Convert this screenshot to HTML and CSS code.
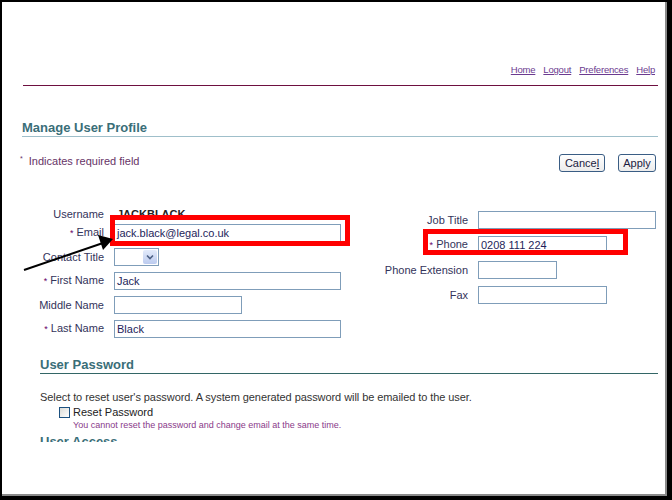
FILE: index.html
```html
<!DOCTYPE html>
<html>
<head>
<meta charset="utf-8">
<link rel="stylesheet" href="styles.css">
</head>
<body>
<div class="frame">
  <div class="page">
    <div class="viewport">
      <div class="global-links">
        <a href="#">Home</a><a href="#">Logout</a><a href="#">Preferences</a><a href="#">Help</a>
      </div>
      <div class="header-rule"></div>
      <h1 class="page-title">Manage User Profile</h1>
      <div class="action-row">
        <div class="required-note"><span class="req-star">*</span> Indicates required field</div>
        <div class="buttons">
          <button class="btn">Cance<u>l</u></button>
          <button class="btn">Apply</button>
        </div>
      </div>

      <div class="form">
        <div class="col-left">
          <div class="label">Username</div><div class="value-bold">JACKBLACK</div>
          <div class="label"><span class="star">*</span> Email</div><div class="field w227">jack.black@legal.co.uk</div>
          <div class="label">Contact Title</div>
          <div class="select"><span class="select-btn"><svg width="8" height="6" viewBox="0 0 8 6"><path d="M1 1.5 L4 4.5 L7 1.5" fill="none" stroke="#4d6185" stroke-width="1.6"/></svg></span></div>
          <div class="label"><span class="star">*</span> First Name</div><div class="field w227">Jack</div>
          <div class="label">Middle Name</div><div class="field w128"></div>
          <div class="label"><span class="star">*</span> Last Name</div><div class="field w227">Black</div>
        </div>
        <div class="col-right">
          <div class="label">Job Title</div><div class="field w178"></div>
          <div class="label"><span class="star">*</span> Phone</div><div class="field w129">0208 111 224</div>
          <div class="label">Phone Extension</div><div class="field w79"></div>
          <div class="label">Fax</div><div class="field w129"></div>
        </div>
        <div class="callout callout-email"></div>
        <div class="callout callout-phone"></div>
        <svg class="arrow" width="100" height="45" viewBox="0 0 100 45">
          <line x1="1" y1="40" x2="80" y2="13" stroke="#000" stroke-width="2"/>
          <polygon points="90,9 75,5 80,20" fill="#000"/>
        </svg>
      </div>

      <div class="section">
        <h2 class="section-title">User Password</h2>
        <p class="desc">Select to reset user's password. A system generated password will be emailed to the user.</p>
        <div class="check-row"><span class="checkbox"></span><span>Reset Password</span></div>
        <div class="tip">You cannot reset the password and change email at the same time.</div>
        <h2 class="section-title next">User Access</h2>
      </div>
    </div>
  </div>
</div>
</body>
</html>
```

FILE: styles.css
```css
* { box-sizing: border-box; }
html, body { margin: 0; padding: 0; background: #000; }
body { width: 672px; height: 500px; overflow: hidden; font-family: "Liberation Sans", Arial, sans-serif; }

.frame {
  width: 672px;
  height: 500px;
  border-top: 2px solid #000;
  border-left: 2px solid #000;
  border-right: 5px solid #000;
  border-bottom: 4px solid #000;
  background: #000;
}
.page {
  height: 100%;
  background: #fff;
  border-right: 2px solid #8a8a8a;
  border-bottom: 2px solid #8a8a8a;
}
.viewport {
  height: 440px;
  overflow: hidden;
  padding: 0 7px 0 21px;
}

.global-links {
  margin-top: 62px;
  display: flex;
  justify-content: flex-end;
  gap: 8px;
  padding-right: 3px;
  font-size: 9.5px;
  letter-spacing: -0.2px;
  line-height: 12px;
}
.global-links a { color: #6b3a8f; text-decoration: underline; }

.header-rule { margin-top: 9px; height: 1px; background: #6e1040; }

.page-title {
  margin: 34px 0 0 -1px;
  font-size: 13px;
  line-height: 16px;
  font-weight: bold;
  color: #3a6e78;
  border-bottom: 1px solid #9fbfca;
}

.action-row {
  margin-top: 17px;
  display: flex;
  justify-content: space-between;
  align-items: center;
  height: 18px;
}
.required-note { font-size: 11px; color: #663366; margin-left: -3px; margin-top: -4px; }
.req-star { font-size: 7px; vertical-align: top; margin-right: 3px; }
.buttons { display: flex; gap: 13px; margin-right: 2px; }
.btn {
  height: 18px;
  padding: 0 4px;
  font-family: "Liberation Sans", Arial, sans-serif;
  font-size: 11px;
  color: #1a1a40;
  border: 1px solid #3a5d84;
  border-radius: 3px;
  background: linear-gradient(#ffffff, #ececec);
}
.btn:first-child { width: 46px; }
.btn:last-child { width: 38px; }

.form {
  position: relative;
  margin-top: 38px;
  display: flex;
  align-items: flex-start;
  gap: 37px;
}
.col-left {
  width: 318px;
  display: grid;
  grid-template-columns: 81px auto;
  grid-template-rows: 8px repeat(5, 18px);
  column-gap: 10px;
  row-gap: 6px;
}
.col-right {
  width: 278px;
  margin-top: 1px;
  display: grid;
  grid-template-columns: 90px auto;
  grid-auto-rows: 18px;
  column-gap: 10px;
  row-gap: 7px;
}
.label {
  align-self: center;
  text-align: right;
  font-size: 11px;
  line-height: 13px;
  color: #33335a;
  white-space: nowrap;
}
.star { color: #660066; font-size: 9px; }
.value-bold {
  align-self: center;
  font-size: 11px;
  line-height: 13px;
  font-weight: bold;
  color: #222;
  margin-left: 3px;
}
.field {
  height: 18px;
  border: 1px solid #7f9db9;
  background: #fff;
  font-size: 11px;
  line-height: 16px;
  padding-left: 2px;
  color: #1e1e5a;
}
.w227 { width: 227px; }
.w128 { width: 128px; }
.w178 { width: 178px; }
.w129 { width: 129px; }
.w79 { width: 79px; }

.select {
  width: 45px;
  height: 18px;
  border: 1px solid #7f9db9;
  display: flex;
  justify-content: flex-end;
  padding: 1px;
}
.select-btn {
  width: 14px;
  height: 14px;
  background: linear-gradient(#e3ebfb, #bccbef);
  border-radius: 2px;
  display: flex;
  align-items: center;
  justify-content: center;
}

.callout {
  position: absolute;
  border: 5px solid #ff0000;
}
.callout-email { left: 87px; top: 5px; width: 240px; height: 31px; }
.callout-phone { left: 400px; top: 19px; width: 205px; height: 26px; }
.arrow { position: absolute; left: 0; top: 20px; }

.section { margin-left: 17px; margin-top: 19px; }
.section-title {
  margin: 0;
  font-size: 13px;
  line-height: 16px;
  font-weight: bold;
  color: #3a6e78;
  border-bottom: 1px solid #336666;
}
.section-title.next { border-bottom: none; margin-top: 3px; }
.desc {
  margin: 17px 0 0 0;
  font-size: 11px;
  line-height: 13px;
  letter-spacing: -0.07px;
  color: #333;
}
.check-row {
  margin-top: 1px;
  margin-left: 19px;
  display: flex;
  align-items: center;
  gap: 3px;
  font-size: 11px;
  line-height: 14px;
  color: #222;
}
.checkbox {
  width: 11px;
  height: 11px;
  border: 1px solid #1c5180;
  background: linear-gradient(135deg, #dcdcd7, #fff);
}
.tip {
  margin-top: 1px;
  margin-left: 33px;
  font-size: 9px;
  line-height: 11px;
  color: #8a3a8a;
}
```
